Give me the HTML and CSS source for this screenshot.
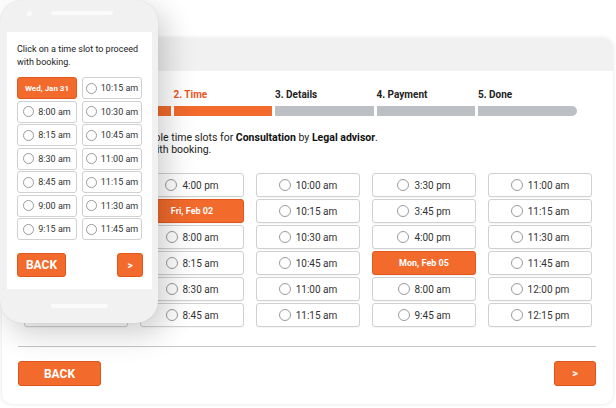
FILE: index.html
```html
<!DOCTYPE html>
<html>
<head>
<meta charset="utf-8">
<link rel="stylesheet" href="styles.css">
</head>
<body>
<div class="stage">
  <div class="window">
    <div class="win-header"></div>
    <div class="win-body">
      <div class="steps">
        <div class="step"><div class="step-label">1. Service</div><div class="bar on first"></div></div>
        <div class="step"><div class="step-label active">2. Time</div><div class="bar on"></div></div>
        <div class="step"><div class="step-label">3. Details</div><div class="bar"></div></div>
        <div class="step"><div class="step-label">4. Payment</div><div class="bar"></div></div>
        <div class="step"><div class="step-label">5. Done</div><div class="bar last"></div></div>
      </div>
      <p class="intro">Below, you can find all the available time slots for <b>Consultation</b> by <b>Legal advisor</b>.<br>Click on a time slot to proceed with booking.</p>
      <div class="slots">
        <div class="col">
          <div class="slot"><span class="radio"></span>2:30 pm</div>
          <div class="slot"><span class="radio"></span>2:45 pm</div>
          <div class="slot"><span class="radio"></span>3:00 pm</div>
          <div class="slot"><span class="radio"></span>3:15 pm</div>
          <div class="slot"><span class="radio"></span>3:30 pm</div>
          <div class="slot"><span class="radio"></span>3:45 pm</div>
        </div>
        <div class="col">
          <div class="slot"><span class="radio"></span>4:00 pm</div>
          <div class="slot date">Fri, Feb 02</div>
          <div class="slot"><span class="radio"></span>8:00 am</div>
          <div class="slot"><span class="radio"></span>8:15 am</div>
          <div class="slot"><span class="radio"></span>8:30 am</div>
          <div class="slot"><span class="radio"></span>8:45 am</div>
        </div>
        <div class="col">
          <div class="slot"><span class="radio"></span>10:00 am</div>
          <div class="slot"><span class="radio"></span>10:15 am</div>
          <div class="slot"><span class="radio"></span>10:30 am</div>
          <div class="slot"><span class="radio"></span>10:45 am</div>
          <div class="slot"><span class="radio"></span>11:00 am</div>
          <div class="slot"><span class="radio"></span>11:15 am</div>
        </div>
        <div class="col">
          <div class="slot"><span class="radio"></span>3:30 pm</div>
          <div class="slot"><span class="radio"></span>3:45 pm</div>
          <div class="slot"><span class="radio"></span>4:00 pm</div>
          <div class="slot date">Mon, Feb 05</div>
          <div class="slot"><span class="radio"></span>8:00 am</div>
          <div class="slot"><span class="radio"></span>9:45 am</div>
        </div>
        <div class="col">
          <div class="slot"><span class="radio"></span>11:00 am</div>
          <div class="slot"><span class="radio"></span>11:15 am</div>
          <div class="slot"><span class="radio"></span>11:30 am</div>
          <div class="slot"><span class="radio"></span>11:45 am</div>
          <div class="slot"><span class="radio"></span>12:00 pm</div>
          <div class="slot"><span class="radio"></span>12:15 pm</div>
        </div>
      </div>
      <div class="divider"></div>
      <div class="footer">
        <button class="btn btn-back">BACK</button>
        <button class="btn btn-next">&gt;</button>
      </div>
    </div>
  </div>

  <div class="phone">
    <div class="phone-top"><span class="cam"></span><span class="speaker"></span></div>
    <div class="screen">
      <p class="m-intro">Click on a time slot to proceed with booking.</p>
      <div class="m-slots">
        <div class="m-slot date">Wed, Jan 31</div>
        <div class="m-slot"><span class="radio"></span>10:15 am</div>
        <div class="m-slot"><span class="radio"></span>8:00 am</div>
        <div class="m-slot"><span class="radio"></span>10:30 am</div>
        <div class="m-slot"><span class="radio"></span>8:15 am</div>
        <div class="m-slot"><span class="radio"></span>10:45 am</div>
        <div class="m-slot"><span class="radio"></span>8:30 am</div>
        <div class="m-slot"><span class="radio"></span>11:00 am</div>
        <div class="m-slot"><span class="radio"></span>8:45 am</div>
        <div class="m-slot"><span class="radio"></span>11:15 am</div>
        <div class="m-slot"><span class="radio"></span>9:00 am</div>
        <div class="m-slot"><span class="radio"></span>11:30 am</div>
        <div class="m-slot"><span class="radio"></span>9:15 am</div>
        <div class="m-slot"><span class="radio"></span>11:45 am</div>
      </div>
      <div class="m-footer">
        <button class="btn m-back">BACK</button>
        <button class="btn m-next">&gt;</button>
      </div>
    </div>
    <div class="phone-bottom"><span class="home"></span></div>
  </div>
</div>
</body>
</html>
```

FILE: styles.css
```css
* { box-sizing: border-box; }
html, body { margin: 0; padding: 0; background: #fff; }
body { font-family: Roboto, "Liberation Sans", sans-serif; color: #333; }

.stage {
  position: relative;
  width: 616px;
  height: 408px;
  overflow: hidden;
}

/* desktop window */
.window {
  margin: 38px 3px 0 2px;
  height: 366px;
  background: #fff;
  border-radius: 10px;
  box-shadow: 0 0 4px rgba(0,0,0,0.12);
  overflow: hidden;
}
.win-header {
  height: 33px;
  background: #f1f1f1;
}
.win-body {
  padding: 0 17px 0 16px;
}
.steps {
  display: grid;
  grid-template-columns: repeat(5, 98.5px);
  column-gap: 3px;
  margin-left: 54px;
  padding-top: 18px;
}
.step-label {
  font-size: 10px;
  font-weight: 700;
  line-height: 12px;
  color: #222;
  height: 12px;
}
.step-label.active { color: #e8561c; }
.bar {
  margin-top: 5px;
  height: 10px;
  background: #bcc0c4;
}
.bar.on { background: #f26a2c; }
.bar.first { border-radius: 5px 0 0 5px; }
.bar.last { border-radius: 0 5px 5px 0; }

.intro {
  margin: 16px 0 0 -13px;
  font-size: 10.5px;
  line-height: 12px;
  color: #1c1c1c;
}
.intro b { font-weight: 700; color: #111; }

.slots {
  display: grid;
  grid-template-columns: repeat(5, 104px);
  column-gap: 12px;
  margin: 17px 0 0 6px;
}
.col {
  display: flex;
  flex-direction: column;
  gap: 2px;
}
.slot {
  height: 24px;
  border: 1px solid #d0d0d0;
  border-radius: 3px;
  background: #fff;
  display: flex;
  align-items: center;
  justify-content: center;
  gap: 5px;
  font-size: 10px;
  color: #333;
  box-shadow: 0 1px 1px rgba(0,0,0,0.04);
}
.radio {
  width: 12px;
  height: 12px;
  border: 1px solid #9a9a9a;
  border-radius: 50%;
  background: #fff;
  flex: none;
}
.slot.date, .m-slot.date {
  background: #f26a2c;
  border-color: #e2581b;
  color: #fff;
  font-weight: 700;
  font-size: 9px;
}
.divider {
  margin-top: 19px;
  height: 1px;
  background: #c6c6c6;
}
.footer {
  display: flex;
  justify-content: space-between;
  margin-top: 14px;
}
.btn {
  font-family: Roboto, "Liberation Sans", sans-serif;
  background: #f26a2c;
  border: 1px solid #e0561a;
  border-radius: 3px;
  color: #fff;
  font-weight: 700;
  padding: 0;
  cursor: pointer;
}
.btn-back { width: 83px; height: 25px; font-size: 12px; }
.btn-next { width: 42px; height: 25px; font-size: 11px; }

/* phone */
.phone {
  position: absolute;
  left: 0;
  top: 0;
  width: 158px;
  height: 323px;
  background: #f1f1f1;
  border-radius: 22px;
  box-shadow: 8px 10px 30px rgba(0,0,0,0.2), 0 0 1px rgba(0,0,0,0.15);
  display: flex;
  flex-direction: column;
}
.phone-top {
  height: 32px;
  display: flex;
  align-items: center;
  padding-left: 27px;
  gap: 19px;
  padding-bottom: 6px;
}
.cam {
  width: 5px; height: 5px;
  border-radius: 50%;
  background: #fafafa;
}
.speaker {
  width: 62px; height: 4px;
  border-radius: 2px;
  background: #fafafa;
}
.screen {
  margin: 0 6px 0 7px;
  height: 257px;
  background: #fff;
  padding: 11px 9px 0 10px;
}
.m-intro {
  margin: 0;
  font-size: 9px;
  line-height: 13px;
  color: #222;
}
.m-slots {
  display: grid;
  grid-template-columns: 60px 60px;
  column-gap: 5px;
  row-gap: 1.5px;
  margin-top: 8px;
}
.m-slot {
  height: 22px;
  border: 1px solid #d0d0d0;
  border-radius: 3px;
  display: flex;
  align-items: center;
  justify-content: center;
  gap: 4px;
  font-size: 9px;
  color: #333;
}
.m-slot .radio { width: 11px; height: 11px; }
.m-slot.date { font-size: 8px; }
.m-footer {
  display: flex;
  justify-content: space-between;
  margin-top: 13px;
}
.m-back { width: 49px; height: 24px; font-size: 12px; }
.m-next { width: 26px; height: 24px; font-size: 10px; margin-right: 0; }
.phone-bottom {
  display: flex;
  padding-top: 15px;
  padding-left: 51px;
}
.home {
  width: 57px;
  height: 4px;
  border-radius: 2px;
  background: #fbfbfb;
}
```
